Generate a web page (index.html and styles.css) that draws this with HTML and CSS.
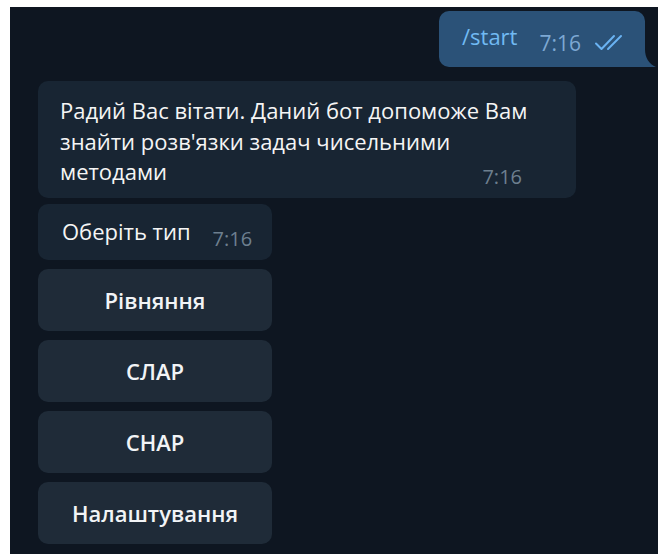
FILE: index.html
```html
<!DOCTYPE html>
<html lang="uk">
<head>
<meta charset="utf-8">
<title>Чат</title>
<link rel="stylesheet" href="styles.css">
</head>
<body>
<div class="chat">
  <div class="row row-out">
    <div class="bubble bubble-out">
      <span class="cmd">/start</span>
      <span class="time time-out">7:16</span>
      <svg class="ticks" width="32" height="17" viewBox="0 0 32 17" aria-hidden="true">
        <path d="M2 9.5 L7.5 15 L20 2" />
        <path d="M14 15 L27 2" />
      </svg>
    </div>
  </div>

  <div class="bubble bubble-in bubble-long">
    <p class="text">Радий Вас вітати. Даний бот допоможе Вам знайти розв'язки задач чисельними методами<span class="time time-in time-float">7:16</span></p>
  </div>

  <div class="bubble bubble-in bubble-short">
    <span class="text">Оберіть тип</span>
    <span class="time time-in">7:16</span>
  </div>

  <div class="keyboard">
    <button class="key">Рівняння</button>
    <button class="key">СЛАР</button>
    <button class="key">СНАР</button>
    <button class="key">Налаштування</button>
  </div>
</div>
</body>
</html>
```

FILE: styles.css
```css
html, body {
  margin: 0;
  padding: 0;
  background: #ffffff;
}

body {
  font-family: "Open Sans", "Noto Sans", sans-serif;
  color: #f5f5f5;
}

.chat {
  margin: 7px 0 0 10px;
  height: 547px;
  background: #0e1621;
  padding: 4px 13px 0 28px;
  box-sizing: border-box;
  display: flex;
  flex-direction: column;
  align-items: flex-start;
}

.row-out {
  align-self: stretch;
  display: flex;
  justify-content: flex-end;
}

.bubble {
  box-sizing: border-box;
  border-radius: 10px;
  font-size: 22px;
}

.bubble-out {
  position: relative;
  background: #2b5278;
  border-radius: 10px 10px 0 10px;
  width: 206px;
  height: 56px;
  padding: 0 0 0 23px;
  display: flex;
  align-items: center;
}

/* little tail on the outgoing bubble */
.bubble-out::after {
  content: "";
  position: absolute;
  right: -11px;
  bottom: 0;
  width: 11px;
  height: 18px;
  background: #2b5278;
  clip-path: path("M0 0 C0 9 4 15 11 18 L0 18 Z");
}

.cmd {
  color: #71baf3;
  margin-top: -6px;
}

.time {
  font-size: 20px;
  line-height: 1;
}

.time-out {
  color: #7da8d3;
  font-size: 21px;
  margin: 8px 0 0 22px;
}

.ticks {
  margin: 6px 0 0 13px;
  fill: none;
  stroke: #6ab3f3;
  stroke-width: 2;
  stroke-linecap: round;
  stroke-linejoin: round;
}

.bubble-in {
  background: #182533;
}

.bubble-long {
  margin-top: 14px;
  width: 538px;
  height: 117px;
  padding: 14px 22px 0 22px;
}

.text {
  margin: 0;
  line-height: 30.5px;
}

.time-float {
  float: right;
  margin: 11px 32px 0 0;
}

.time-in {
  color: #6d7f8f;
}

.bubble-short {
  margin-top: 6px;
  width: 234px;
  height: 56px;
  padding: 0 0 0 24px;
  display: flex;
  align-items: center;
}

.bubble-short .text {
  margin-top: -2px;
}

.bubble-short .time-in {
  margin: 14px 0 0 22px;
}

.keyboard {
  margin-top: 9px;
  display: flex;
  flex-direction: column;
  gap: 9px;
}

.key {
  width: 234px;
  height: 62px;
  border: 0;
  border-radius: 10px;
  background: #1f2b38;
  color: #f2f4f6;
  font-family: "Open Sans", "Noto Sans", sans-serif;
  font-size: 22px;
  font-weight: 600;
  padding: 0;
  cursor: pointer;
}
```
